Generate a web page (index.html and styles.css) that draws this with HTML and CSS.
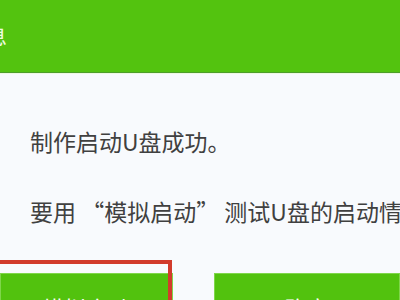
FILE: index.html
```html
<!DOCTYPE html>
<html lang="zh-CN">
<head>
<meta charset="utf-8">
<title>提示信息</title>
<link rel="stylesheet" href="styles.css">
</head>
<body>
<div class="dialog">
  <header class="titlebar"><span class="title">信息</span></header>
  <main class="content">
    <p class="msg msg-first">制作启动U盘成功。</p>
    <p class="msg msg-second">要用 “模拟启动” 测试U盘的启动情况</p>
  </main>
  <div class="actions">
    <button class="btn btn-left">模拟启动</button>
    <button class="btn btn-right">确定</button>
    <div class="mark"></div>
  </div>
</div>
</body>
</html>
```
FILE: styles.css
```css
html, body {
  margin: 0;
  padding: 0;
  width: 400px;
  height: 300px;
  overflow: hidden;
  background: #f8fafd;
  font-family: "Noto Sans CJK SC", "Noto Sans", sans-serif;
}
.dialog {
  display: flex;
  flex-direction: column;
}
.titlebar {
  height: 72px;
  background: #53c30f;
  border-bottom: 1px solid #4d9e2a;
  box-shadow: 0 1px 0 #eef7e2;
  display: flex;
  align-items: center;
  overflow: hidden;
}
.title {
  margin-left: -35px;
  margin-top: -2px;
  font-size: 21px;
  line-height: 1;
  color: #eefbe0;
  white-space: nowrap;
}
.content {
  padding: 53px 0 0 30px;
  white-space: nowrap;
  overflow: hidden;
}
.msg {
  margin: 0;
  font-size: 23px;
  line-height: 30px;
  color: #404040;
}
.msg-second {
  margin-top: 40px;
}
.actions {
  position: relative;
  margin-top: 47px;
  display: flex;
  gap: 41px;
}
.btn {
  height: 60px;
  border: 1px solid #7fd64a;
  background: #52c20e;
  color: #ffffff;
  font-family: inherit;
  font-size: 22px;
  padding: 22px 0 0;
  display: flex;
  justify-content: center;
  align-items: flex-start;
  line-height: 1;
}
.btn-left {
  width: 177px;
}
.btn-right {
  width: 190px;
}
.mark {
  position: absolute;
  left: -4px;
  top: -13px;
  width: 176px;
  height: 80px;
  border: 4px solid #d23b2c;
  box-sizing: border-box;
}
```
